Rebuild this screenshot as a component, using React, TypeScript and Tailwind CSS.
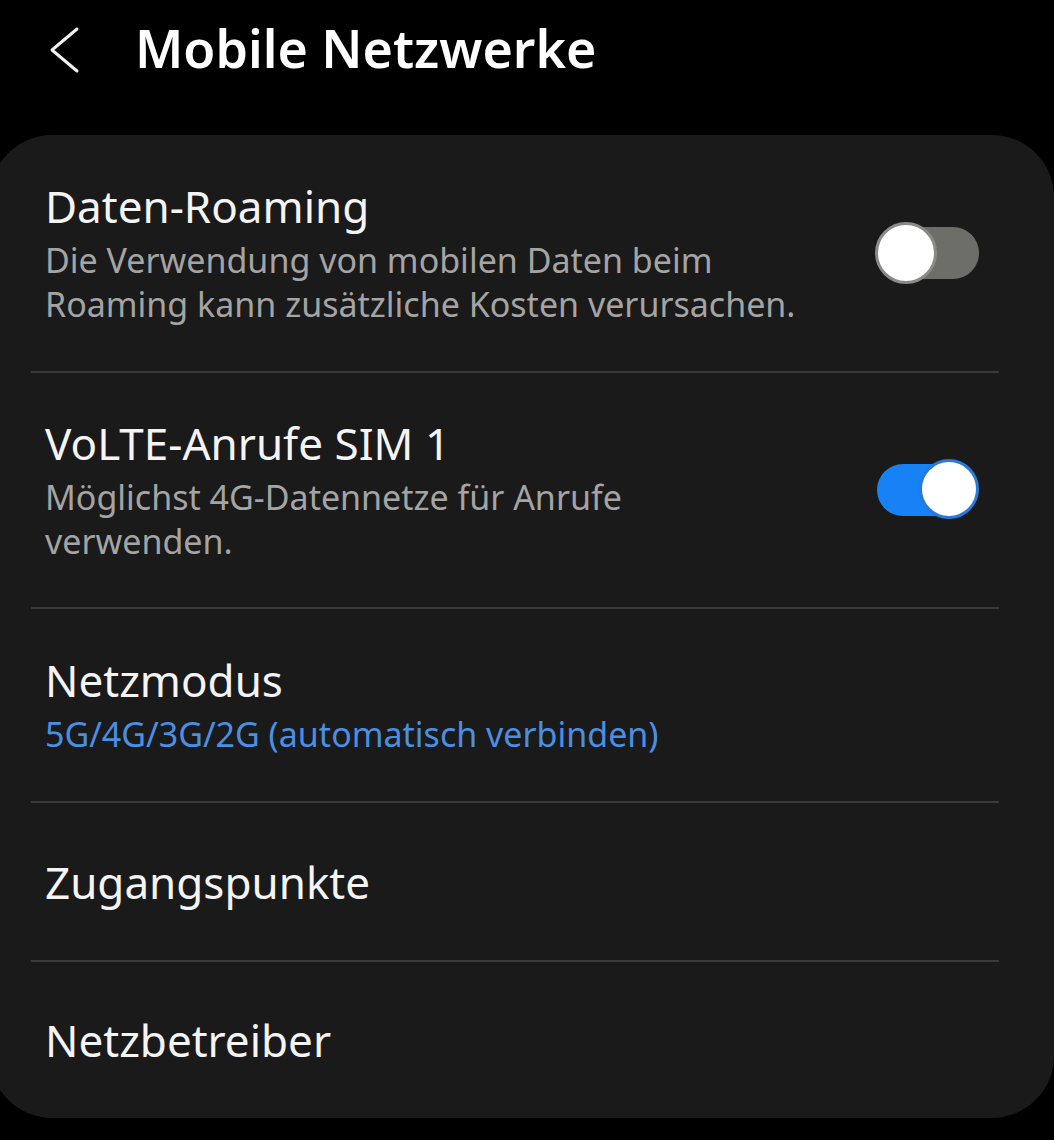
import { FC } from 'react';

const Toggle: FC<{ on: boolean }> = ({ on }) => {
  if (on) {
    return (
      <div className="relative w-[102px] h-[62px] flex items-center shrink-0">
        <div className="w-[100px] h-[52px] rounded-full bg-[#1782f5]" />
        <div className="absolute right-0 top-0 w-[60px] h-[60px] rounded-full bg-white border-[3px] border-[#2a78d8]" />
      </div>
    );
  }
  return (
    <div className="relative w-[104px] h-[62px] flex items-center justify-end shrink-0">
      <div className="w-[98px] h-[52px] rounded-full bg-[#6e6e69]" />
      <div className="absolute left-0 top-0 w-[62px] h-[62px] rounded-full bg-white border-[3px] border-[#8a8a88]" />
    </div>
  );
};

const Row: FC<{
  title: string;
  sub?: string[];
  subBlue?: boolean;
  toggle?: boolean;
  h: string;
  last?: boolean;
}> = (props) => {
  return (
    <div className={`${props.h} flex items-center ${props.last ? '' : 'border-b-2 border-[#3a3a3a]'}`}>
      <div className="flex-1 pl-[14px]">
        <div className="text-[44px] leading-[52px] text-[#f4f4f4]">{props.title}</div>
        {props.sub && (
          <div
            className={`text-[34px] leading-[44px] mt-[6px] ${
              props.subBlue ? 'text-[#4b8fe2]' : 'text-[#a4a4a4]'
            }`}
          >
            {props.sub.map((s) => (
              <div key={s}>{s}</div>
            ))}
          </div>
        )}
      </div>
      {props.toggle !== undefined && (
        <div className="pr-[20px]">
          <Toggle on={props.toggle} />
        </div>
      )}
    </div>
  );
};

export default function App() {
  return (
    <div
      className="w-[1054px] h-[1140px] bg-black overflow-hidden flex flex-col"
      style={{ fontFamily: '"Noto Sans", sans-serif' }}
    >
      <div className="h-[135px] flex items-start pt-[20px]">
        <div className="w-[135px] pl-[46px] pt-[6px]">
          <svg width="36" height="48" viewBox="0 0 36 48" fill="none">
            <path d="M31 3 L6 24 L31 45" stroke="#f2f2f2" strokeWidth="3" strokeLinecap="round" strokeLinejoin="round" />
          </svg>
        </div>
        <div className="text-[52px] leading-[56px] font-semibold text-white">Mobile Netzwerke</div>
      </div>
      <div className="-ml-[10px] w-[1064px] h-[983px] bg-[#1a1a1a] rounded-[62px]">
        <div className="ml-[41px] mr-[55px]">
          <Row
            h="h-[238px]"
            title="Daten-Roaming"
            sub={['Die Verwendung von mobilen Daten beim', 'Roaming kann zusätzliche Kosten verursachen.']}
            toggle={false}
          />
          <Row
            h="h-[236px]"
            title="VoLTE-Anrufe SIM 1"
            sub={['Möglichst 4G-Datennetze für Anrufe', 'verwenden.']}
            toggle={true}
          />
          <Row h="h-[194px]" title="Netzmodus" sub={['5G/4G/3G/2G (automatisch verbinden)']} subBlue />
          <Row h="h-[159px]" title="Zugangspunkte" />
          <Row h="h-[156px]" title="Netzbetreiber" last />
        </div>
      </div>
    </div>
  );
}
